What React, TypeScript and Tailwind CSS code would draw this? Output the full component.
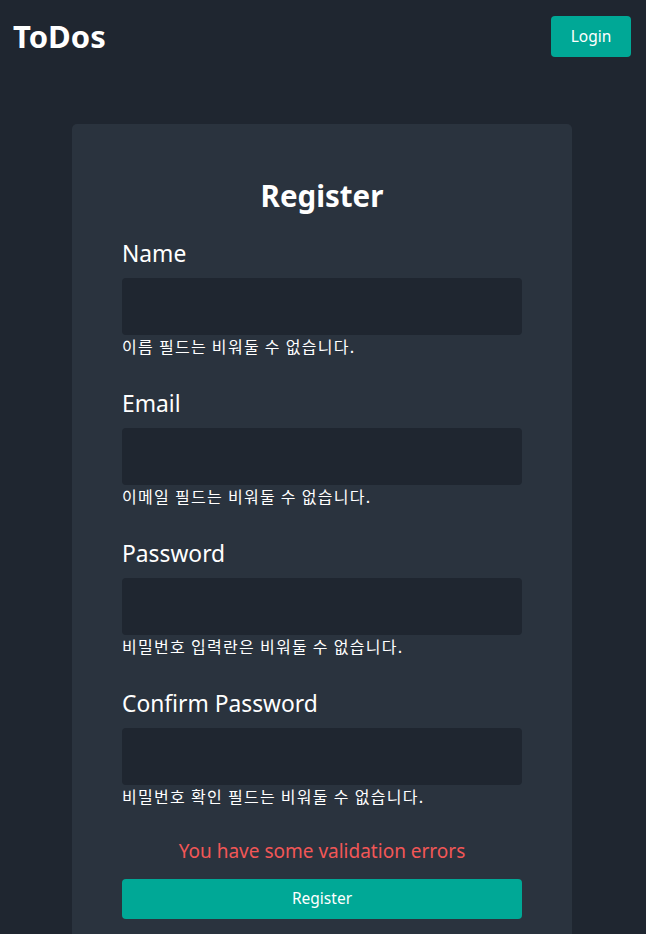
const fields = [
  { label: 'Name', type: 'text', error: '이름 필드는 비워둘 수 없습니다.' },
  { label: 'Email', type: 'email', error: '이메일 필드는 비워둘 수 없습니다.' },
  { label: 'Password', type: 'password', error: '비밀번호 입력란은 비워둘 수 없습니다.' },
  { label: 'Confirm Password', type: 'password', error: '비밀번호 확인 필드는 비워둘 수 없습니다.' },
]

export default function App() {
  return (
    <div
      className="min-h-screen bg-[#1f2630] text-white"
      style={{ fontFamily: '"Noto Sans", "Noto Sans CJK KR", sans-serif' }}
    >
      {/* Top bar */}
      <header className="flex h-[73px] items-center justify-between pl-[13px] pr-[15px]">
        <h1 className="text-[31px] font-bold leading-none">ToDos</h1>
        <button className="h-[41px] w-[80px] rounded-[4px] bg-[#00a896] text-[15.5px] text-white">
          Login
        </button>
      </header>

      {/* Register card */}
      <main className="mt-[51px] flex justify-center pl-[72px] pr-[74px]">
        <div className="w-[500px] rounded-t-[5px] bg-[#2a333e] px-[50px] pt-[52px] pb-[40px]">
          <h2 className="h-[40px] text-center text-[29.5px] font-bold leading-[40px]">Register</h2>

          <form className="mt-[23px]" onSubmit={(e) => e.preventDefault()}>
            {fields.map((f, i) => (
              <div key={f.label} className={i > 0 ? 'mt-[32px]' : ''}>
                <label className="block h-[30px] text-[22.8px] leading-[30px]">{f.label}</label>
                <input
                  type={f.type}
                  className="mt-[9px] block h-[57px] w-full rounded-[4px] bg-[#1f2630] px-3 outline-none"
                />
                <p
                  className="h-[22px] text-[16px] leading-[22px] tracking-[1.3px]"
                  style={{ fontFamily: '"Noto Sans CJK KR", "Noto Sans", sans-serif' }}
                >
                  {f.error}
                </p>
              </div>
            ))}

            <p className="mt-[30px] h-[28px] text-center text-[19px] leading-[28px] text-[#f25757]">
              You have some validation errors
            </p>
            <button
              type="submit"
              className="mt-[14px] block h-[40px] w-full rounded-[4px] bg-[#00a896] text-[15.5px] text-white"
            >
              Register
            </button>
          </form>
        </div>
      </main>
    </div>
  )
}
